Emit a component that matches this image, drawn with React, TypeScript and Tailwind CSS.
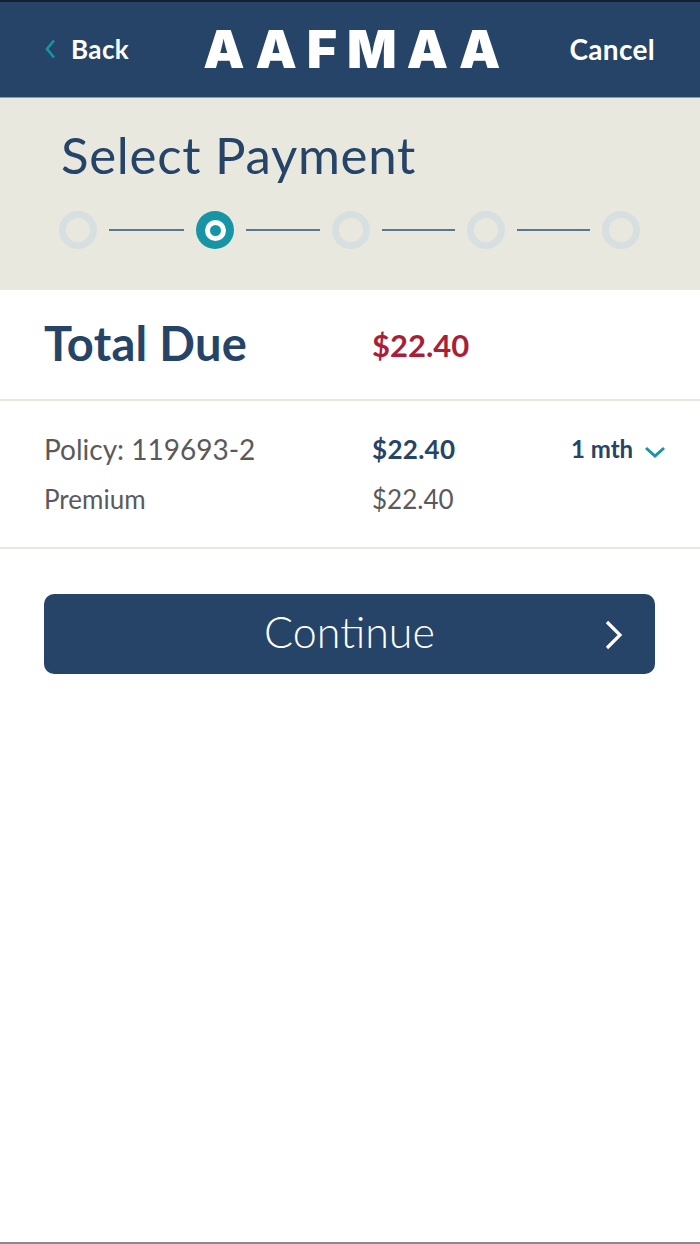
import React from "react";

const font = { fontFamily: 'Lato, "Open Sans", sans-serif' };

function Step({ active }: { active?: boolean }) {
  if (active) {
    return (
      <div className="w-[38px] h-[38px] rounded-full bg-[#1795a5] flex items-center justify-center shrink-0">
        <div className="w-[21px] h-[21px] rounded-full border-[5px] border-white bg-[#1795a5]" />
      </div>
    );
  }
  return <div className="w-[38px] h-[38px] rounded-full border-[7px] border-[#d8dfe1] shrink-0" />;
}

function Line({ width = "w-[73.5px]" }: { width?: string }) {
  return <div className={`${width} h-[2px] bg-[#5a7696] mx-[12px] shrink-0`} />;
}

export default function App() {
  return (
    <div className="w-[700px] h-[1244px] bg-white flex flex-col overflow-hidden" style={font}>
      <div className="h-[2px] bg-[#10202e]" />
      <header className="h-[96px] bg-[#264468] flex items-center justify-between pl-[44px] pr-[45px] border-b border-[#8b9aa6]">
        <div className="flex items-center gap-[15px] w-[100px] shrink-0 -mt-[2px]">
          <svg width="12" height="20" viewBox="0 0 12 20" fill="none">
            <path d="M10 1.5 L3 10 L10 18.5" stroke="#1795a5" strokeWidth="2.6" />
          </svg>
          <span className="text-[26px] font-bold leading-none text-white tracking-[0.4px]">Back</span>
        </div>
        <span className="text-[52px] leading-none font-black text-white tracking-[10px] whitespace-nowrap -ml-[5px] -mr-[5px]" style={{ fontFamily: 'Inter, sans-serif' }}>
          AAFMAA
        </span>
        <span className="text-[28px] font-bold leading-none text-white tracking-[0.3px] -mt-[2px]">Cancel</span>
      </header>
      <section className="h-[192px] bg-[#e8e8df] pl-[59px] pt-[27px]">
        <h1 className="text-[51px] leading-[60px] font-normal text-[#264468] pl-[2px] tracking-[0.7px]">Select Payment</h1>
        <div className="flex items-center mt-[26px]">
          <Step />
          <Line width="w-[75px]" />
          <Step active />
          <Line />
          <Step />
          <Line />
          <Step />
          <Line width="w-[73px]" />
          <Step />
        </div>
      </section>
      <section className="h-[111px] flex items-center pl-[44px] border-b-2 border-[#e8e8df]">
        <span className="w-[328px] shrink-0 text-[47px] font-bold text-[#264468] leading-none tracking-[0.3px] -mt-[2px]">Total Due</span>
        <span className="text-[31px] font-bold text-[#ab1e38] leading-none mt-[2px]">$22.40</span>
      </section>
      <section className="h-[148px] pl-[44px] pr-[33px] border-b-2 border-[#e8e8df] pt-[30px]">
        <div className="flex items-center h-[36px]">
          <span className="w-[328px] shrink-0 text-[28px] text-[#5a5a5a] leading-none">Policy: 119693-2</span>
          <span className="w-[199px] shrink-0 text-[26px] font-bold text-[#264468] leading-none tracking-[0.3px]">$22.40</span>
          <span className="text-[24px] font-bold text-[#264468] leading-none whitespace-nowrap">1 mth</span>
          <svg className="ml-[11px] mt-[6px] shrink-0" width="22" height="12" viewBox="0 0 22 12" fill="none">
            <path d="M2 2 L11 10 L20 2" stroke="#1795a5" strokeWidth="3" />
          </svg>
        </div>
        <div className="flex items-center h-[36px] mt-[14px]">
          <span className="w-[328px] shrink-0 text-[26px] text-[#5a5a5a] leading-none">Premium</span>
          <span className="text-[26px] text-[#5a5a5a] leading-none">$22.40</span>
        </div>
      </section>
      <div className="pl-[44px] pt-[45px]">
        <button className="relative w-[611px] h-[80px] rounded-[10px] bg-[#264468] flex items-center justify-center">
          <span className="text-[43px] font-light text-white leading-none -mt-[5px]">Continue</span>
          <svg className="absolute right-[31px] top-[26px]" width="20" height="30" viewBox="0 0 20 30" fill="none">
            <path d="M3 2 L16 15 L3 28" stroke="white" strokeWidth="3.2" />
          </svg>
        </button>
      </div>
      <div className="flex-1" />
      <div className="h-[2px] bg-[#8a8a8a]" />
    </div>
  );
}
